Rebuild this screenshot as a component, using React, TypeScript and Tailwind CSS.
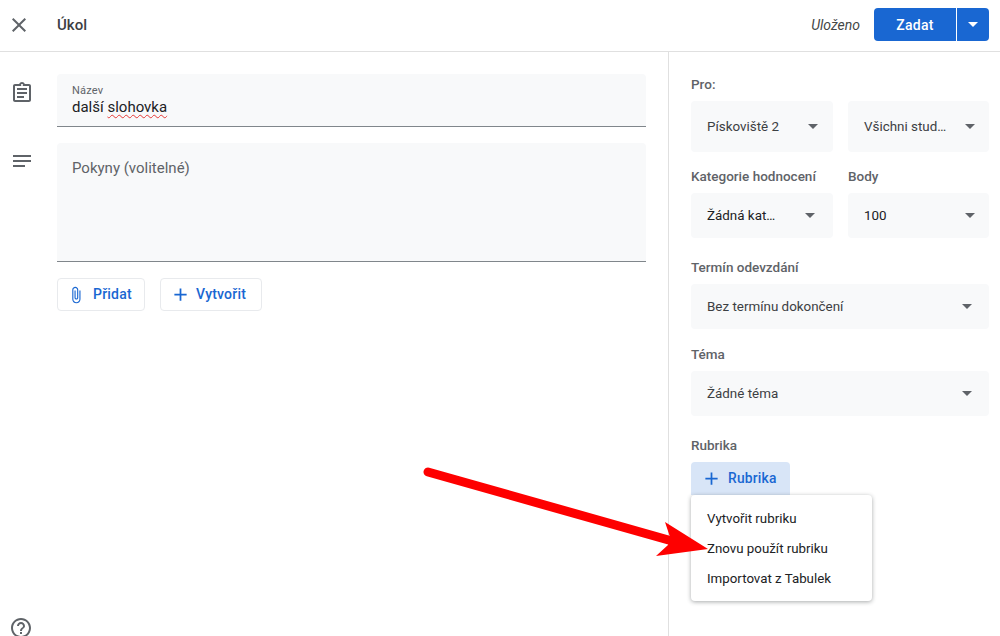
import React from "react";

const font = { fontFamily: "Roboto, sans-serif" };

const Icon = ({ d, className }: { d: string; className: string }) => (
  <svg viewBox="0 0 24 24" fill="currentColor" className={className}>
    <path d={d} />
  </svg>
);

const CLOSE = "M19 6.41L17.59 5 12 10.59 6.41 5 5 6.41 10.59 12 5 17.59 6.41 19 12 13.41 17.59 19 19 17.59 13.41 12z";
const ASSIGNMENT = "M19 3h-4.18C14.4 1.84 13.3 1 12 1s-2.4.84-2.82 2H5c-1.1 0-2 .9-2 2v14c0 1.1.9 2 2 2h14c1.1 0 2-.9 2-2V5c0-1.1-.9-2-2-2zm-7 0c.55 0 1 .45 1 1s-.45 1-1 1-1-.45-1-1 .45-1 1-1zm7 16H5V5h14v14zM7 7h10v2H7zM7 11h10v2H7zM7 15h7v2H7z";
const NOTES = "M3 18h12v-2H3v2zM3 6v2h18V6H3zm0 7h18v-2H3v2z";
const ATTACH = "M16.5 6v11.5c0 2.21-1.79 4-4 4s-4-1.79-4-4V5c0-1.38 1.12-2.5 2.5-2.5s2.5 1.12 2.5 2.5v10.5c0 .55-.45 1-1 1s-1-.45-1-1V6H10v9.5c0 1.38 1.12 2.5 2.5 2.5s2.5-1.12 2.5-2.5V5c0-2.21-1.79-4-4-4S7 2.79 7 5v12.5c0 3.04 2.46 5.5 5.5 5.5s5.5-2.46 5.5-5.5V6h-1.5z";
const PLUS = "M19 13h-6v6h-2v-6H5v-2h6V5h2v6h6v2z";
const HELP = "M11 18h2v-2h-2v2zm1-16C6.48 2 2 6.48 2 12s4.48 10 10 10 10-4.48 10-10S17.52 2 12 2zm0 18c-4.41 0-8-3.59-8-8s3.59-8 8-8 8 3.59 8 8-3.59 8-8 8zm0-14c-2.21 0-4 1.79-4 4h2c0-1.1.9-2 2-2s2 .9 2 2c0 2-3 1.75-3 5h2c0-2.25 3-2.5 3-5 0-2.21-1.79-4-4-4z";

const Caret = ({ className = "text-[#5f6368]" }: { className?: string }) => (
  <svg viewBox="0 0 10 5" fill="currentColor" className={`w-[10px] h-[5px] shrink-0 ${className}`}>
    <path d="M0 0l5 5 5-5z" />
  </svg>
);

type SelectProps = { text: string; height: string; width: string; dark?: boolean; pr?: string };

const Select = ({ text, height, width, dark, pr = "pr-[16px]" }: SelectProps) => (
  <div className={`flex items-center justify-between rounded bg-[#f8f9fa] pl-[16px] ${pr} ${height} ${width}`}>
    <span className={`text-[13.4px] pt-[2px] ${dark ? "text-[#202124]" : "text-[#3c4043]"}`}>{text}</span>
    <Caret />
  </div>
);

const Label = ({ children }: { children: React.ReactNode }) => (
  <div className="h-[17px] mb-2 text-[13.5px] leading-[17px] font-medium text-[#5f6368] whitespace-nowrap">{children}</div>
);

const Arrow = () => (
  <svg className="absolute left-0 top-0 pointer-events-none" width="1000" height="636" viewBox="0 0 1000 636">
    <line x1="428" y1="472" x2="672" y2="541" stroke="#fe0000" strokeWidth="9" strokeLinecap="round" />
    <path d="M665 522L708 549 656 556 668 545 670 537z" fill="#fe0000" />
  </svg>
);

export default function App() {
  return (
    <div style={font} className="relative h-[636px] w-[1000px] overflow-hidden bg-white flex flex-col">
      <header className="h-[52px] shrink-0 flex items-center border-b border-[#e0e0e0] pb-[2px]">
        <div className="w-[57px] flex justify-center pr-[20px]">
          <Icon d={CLOSE} className="w-6 h-6 text-[#5f6368]" />
        </div>
        <h1 className="text-[15px] font-medium text-[#3c4043] pt-[2px]">Úkol</h1>
        <div className="ml-auto flex items-center pr-[11px]">
          <span className="italic text-[14px] text-[#444746] mr-[14px] pt-[1px]">Uloženo</span>
          <div className="flex h-[33px] w-[115px] rounded overflow-hidden bg-[#1967d2] text-white">
            <div className="w-[83px] flex items-center justify-center text-[14px] font-medium tracking-[0.3px] border-r border-white pt-[2px]">Zadat</div>
            <div className="flex-1 flex items-center justify-center">
              <Caret className="text-white" />
            </div>
          </div>
        </div>
      </header>

      <div className="flex flex-1 min-h-0">
        <main className="w-[669px] shrink-0 border-r border-[#e0e0e0] flex flex-col pt-[22px]">
          <div className="flex">
            <div className="w-[57px] flex justify-center pr-[13px] pt-[7px]">
              <Icon d={ASSIGNMENT} className="w-6 h-6 text-[#5f6368]" />
            </div>
            <div className="w-[589px] h-[53px] bg-[#f8f9fa] rounded-t border-b border-[#80868b] pl-[15px] pt-[10px]">
              <div className="text-[11px] leading-[13px] text-[#5f6368] tracking-[0.2px]">Název</div>
              <div className="text-[15px] leading-[20px] text-[#202124]">
                další <span className="underline decoration-wavy decoration-[#e53935] decoration-1 underline-offset-2">slohovka</span>
              </div>
            </div>
          </div>
          <div className="flex mt-4">
            <div className="w-[57px] flex justify-center pr-[13px] pt-[6px]">
              <Icon d={NOTES} className="w-6 h-6 text-[#5f6368]" />
            </div>
            <div className="w-[589px] h-[119px] bg-[#f8f9fa] rounded-t border-b border-[#80868b] pl-[15px] pt-[15px]">
              <div className="text-[15px] leading-[20px] text-[#5f6368]">Pokyny (volitelné)</div>
            </div>
          </div>
          <div className="flex gap-[15px] ml-[57px] mt-4">
            <button className="h-[33px] w-[88px] flex items-center rounded border border-[#e8eaed] pl-[9px] text-[#1967d2] text-[14px] font-medium tracking-[0.2px]">
              <Icon d={ATTACH} className="w-[18px] h-[18px] mr-[8px]" />
              Přidat
            </button>
            <button className="h-[33px] w-[102px] flex items-center rounded border border-[#e8eaed] pl-[9px] text-[#1967d2] text-[14px] font-medium tracking-[0.2px]">
              <Icon d={PLUS} className="w-[21px] h-[21px] mr-[5px]" />
              Vytvořit
            </button>
          </div>
          <div className="mt-auto -mb-[4px] ml-[9px]">
            <Icon d={HELP} className="w-6 h-6 text-[#5f6368]" />
          </div>
        </main>

        <aside className="flex-1 pl-[22px] pr-[11px] pt-[24px]">
          <Label>Pro:</Label>
          <div className="flex gap-[15px]">
            <Select text="Pískoviště 2" height="h-[51px]" width="w-[142px]" pr="pr-[15px]" />
            <Select text="Všichni stud…" height="h-[51px]" width="w-[141px]" pr="pr-[14px]" />
          </div>
          <div className="flex gap-[15px] mt-4">
            <div className="w-[142px]">
              <Label>Kategorie hodnocení</Label>
              <Select text="Žádná kat…" height="h-[45px]" width="w-[142px]" dark pr="pr-[18px]" />
            </div>
            <div className="w-[141px]">
              <Label>Body</Label>
              <Select text="100" height="h-[45px]" width="w-[141px]" dark pr="pr-[14px]" />
            </div>
          </div>
          <div className="mt-[21px]">
            <Label>Termín odevzdání</Label>
            <Select text="Bez termínu dokončení" height="h-[45px]" width="w-[298px]" pr="pr-[17px]" />
          </div>
          <div className="mt-[17px]">
            <Label>Téma</Label>
            <Select text="Žádné téma" height="h-[45px]" width="w-[298px]" pr="pr-[17px]" />
          </div>
          <div className="mt-[21px] relative">
            <Label>Rubrika</Label>
            <button className="h-[33px] w-[99px] flex items-center rounded-t bg-[#d8e5f7] pl-[10px] text-[#1967d2] text-[13.8px] font-medium tracking-[0.2px]">
              <Icon d={PLUS} className="w-[21px] h-[21px] mr-[6px]" />
              Rubrika
            </button>
            <div className="absolute left-0 top-[58px] w-[181px] h-[106px] rounded bg-white shadow-[0_1px_4px_rgba(60,64,67,0.45)] pt-[9px] text-[13.3px] text-[#202124]">
              <div className="h-[30px] leading-[30px] pl-[16px]">Vytvořit rubriku</div>
              <div className="h-[30px] leading-[30px] pl-[16px]">Znovu použít rubriku</div>
              <div className="h-[30px] leading-[30px] pl-[16px]">Importovat z Tabulek</div>
            </div>
          </div>
        </aside>
      </div>
      <Arrow />
    </div>
  );
}
